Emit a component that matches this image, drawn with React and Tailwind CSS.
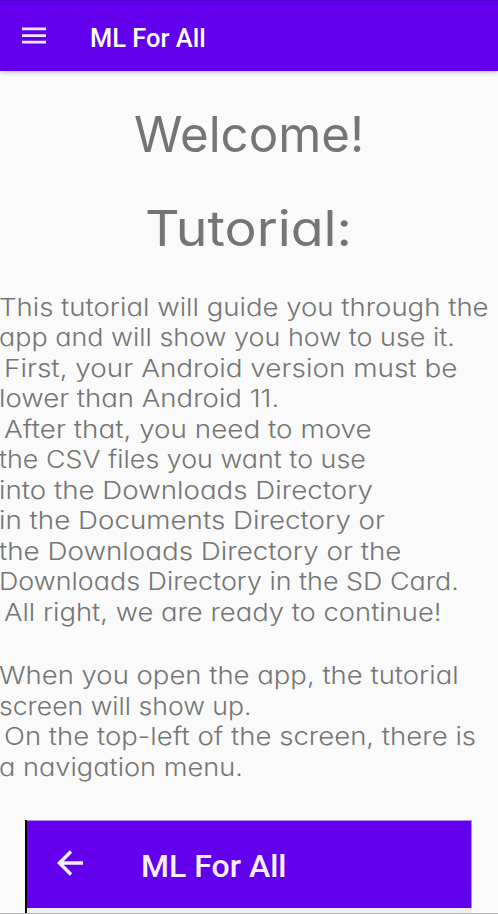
import { useLayoutEffect, useRef, useState } from "react";

// One line of text, stretched horizontally until it spans `width` pixels.
function FitLine({ text, width, className = "" }) {
  const ref = useRef(null);
  const [scale, setScale] = useState(1);
  useLayoutEffect(() => {
    setScale(width / ref.current.offsetWidth);
  }, [text, width]);
  return (
    <div className={`whitespace-nowrap ${className}`} style={{ width: `${width}px` }}>
      <span
        ref={ref}
        className="inline-block origin-left"
        style={{ transform: `scaleX(${scale})` }}
      >
        {text}
      </span>
    </div>
  );
}

const intro = [
  ["This tutorial will guide you through the", 490],
  ["app and will show you how to use it.", 456],
  ["First, your Android version must be", 453, true],
  ["lower than Android 11.", 280],
  ["After that, you need to move", 368, true],
  ["the CSV files you want to use", 367],
  ["into the Downloads Directory", 374],
  ["in the Documents Directory or", 386],
  ["the Downloads Directory or the", 402],
  ["Downloads Directory in the SD Card.", 460],
  ["All right, we are ready to continue!", 438, true],
];

const menu = [
  ["When you open the app, the tutorial", 460],
  ["screen will show up.", 253],
  ["On the top-left of the screen, there is", 472, true],
  ["a navigation menu.", 244],
];

function Paragraph({ lines, className = "" }) {
  return (
    <div className={`text-[24.5px] leading-[30.47px] font-light ${className}`}>
      {lines.map(([text, width, indent]) => (
        <FitLine key={text} text={text} width={width} className={indent ? "ml-1" : "-ml-px"} />
      ))}
    </div>
  );
}

export default function App() {
  return (
    <div className="flex h-[914px] w-[498px] flex-col overflow-hidden border-b border-[#b4b4b4] bg-[#fafafa] font-['Inter',sans-serif] text-[#757575]">
      <header className="flex h-[71px] shrink-0 items-center border-t border-[#5000cc] bg-[#6200ee] pl-[22px] text-white shadow-[0_1px_4px_rgba(0,0,0,0.3)]">
        <svg width="24" height="18" viewBox="0 0 24 18" fill="#f1e8fe">
          <path d="M0 .5h24v2.7H0zM0 7.2h24v2.7H0zM0 13.8h24v2.7H0z" />
        </svg>
        <FitLine
          text="ML For All"
          width={115.5}
          className="mt-[3px] ml-[44px] font-['Roboto',sans-serif] text-[26px] leading-8 font-medium"
        />
      </header>
      <main className="flex flex-col [font-feature-settings:'cv11']">
        <h1 className="mt-[34px] flex h-[60px] justify-center pr-px text-[49px] leading-[60px]">
          <FitLine text="Welcome!" width={230} />
        </h1>
        <h2 className="mt-[34px] flex h-[60px] justify-center pr-px text-[49px] leading-[60px]">
          <FitLine text="Tutorial:" width={207} />
        </h2>
        <Paragraph lines={intro} className="mt-[33px]" />
        <Paragraph lines={menu} className="mt-[33px]" />
        <section className="mt-[38px] mr-[26px] ml-[25px] h-[100px] border-l-2 border-black bg-[#f0f0f0]">
          <div className="flex h-[88px] items-center border-t border-r border-[#b48af5] bg-[#6200ee] pl-[30px] text-[#f6f0fe]">
            <svg
              width="27"
              height="26"
              viewBox="0 0 27 26"
              fill="none"
              stroke="currentColor"
              strokeWidth="3.5"
              className="-mt-[3px]"
            >
              <path d="M26 13H3M14 1.5L2.5 13L14 24.5" />
            </svg>
            <FitLine
              text="ML For All"
              width={145}
              className="mt-[2px] ml-[57px] font-['Roboto',sans-serif] text-[32px] leading-10 font-medium"
            />
          </div>
        </section>
      </main>
    </div>
  );
}
